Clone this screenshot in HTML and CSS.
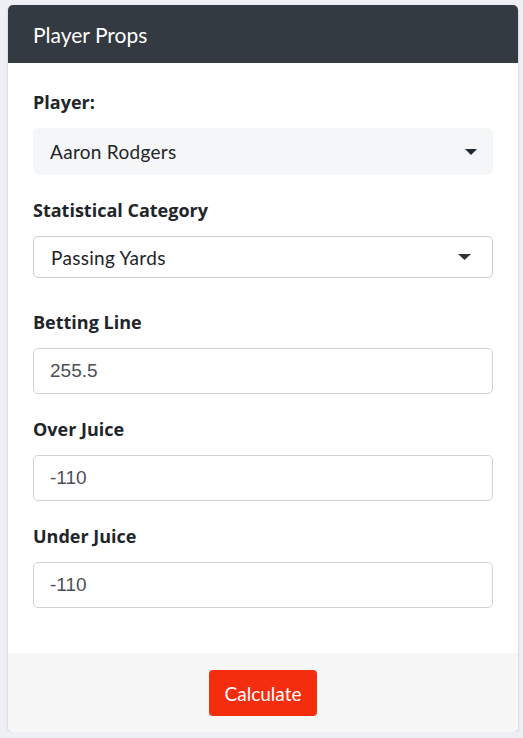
FILE: index.html
```html
<!DOCTYPE html>
<html lang="en">

<head>
    <meta charset="UTF-8">
    <meta name="viewport" content="width=device-width">
    <title>Player Props</title>
    <link rel="stylesheet" href="styles.css">
</head>

<body>
    <div class="card">
        <div class="card-header">Player Props</div>

        <div class="card-body">
            <div class="group">
                <label class="label">Player:</label>
                <div class="select select-filled">
                    <span>Aaron Rodgers</span>
                    <svg class="caret" width="12" height="6" viewBox="0 0 12 6"><path d="M0 0h12L6 6z" fill="#212933"/></svg>
                </div>
            </div>

            <div class="group group-wide">
                <label class="label">Statistical Category</label>
                <div class="select select-bordered">
                    <span>Passing Yards</span>
                    <svg class="caret" width="13" height="6" viewBox="0 0 13 6"><path d="M0 0h13L6.5 6z" fill="#333"/></svg>
                </div>
            </div>

            <div class="group">
                <label class="label">Betting Line</label>
                <input class="input" type="text" value="255.5">
            </div>

            <div class="group">
                <label class="label">Over Juice</label>
                <input class="input" type="text" value="-110">
            </div>

            <div class="group">
                <label class="label">Under Juice</label>
                <input class="input" type="text" value="-110">
            </div>
        </div>

        <div class="card-footer">
            <button class="btn-calc">Calculate</button>
        </div>
    </div>
</body>

</html>
```

FILE: styles.css
```css
* {
    margin: 0;
    padding: 0;
    box-sizing: border-box;
}
body {
    background: #eff0f5;
    padding: 5px 5px 0 8px;
    font-family: Lato, "Noto Sans", sans-serif;
    color: #212529;
}
.card {
    background: #fff;
    border-radius: 5px;
    overflow: hidden;
    box-shadow: 0 1px 3px rgba(0, 0, 0, 0.18);
}
.card-header {
    height: 58px;
    display: flex;
    align-items: center;
    padding: 0 25px;
    background: #343a42;
    color: #fff;
    font-size: 21px;
}
.card-body {
    padding: 27px 25px 22px;
}
.group {
    margin-bottom: 23px;
}
.group-wide {
    margin-bottom: 32px;
}
.label {
    display: block;
    font-family: "Open Sans", Lato, sans-serif;
    font-size: 18px;
    font-weight: 700;
    line-height: 24px;
    margin-bottom: 14px;
}
.select {
    display: flex;
    align-items: center;
    justify-content: space-between;
    font-size: 19px;
    letter-spacing: 0.3px;
    color: #212529;
    padding-left: 17px;
}
.select-filled {
    height: 47px;
    background: #f5f6f8;
    border-radius: 6px;
    padding-right: 16px;
}
.select-bordered {
    height: 42px;
    border: 1px solid #cccccc;
    border-radius: 5px;
    padding-right: 21px;
}
.input {
    display: block;
    width: 100%;
    height: 46px;
    border: 1px solid #d0d3d9;
    border-radius: 5px;
    padding: 0 16px;
    font-family: "Liberation Sans", Arial, sans-serif;
    font-size: 19px;
    color: #495057;
    outline: none;
}
.card-footer {
    background: #f7f7f7;
    padding: 17px 0 16px;
    display: flex;
    justify-content: center;
}
.btn-calc {
    width: 108px;
    height: 46px;
    border: none;
    border-radius: 4px;
    background: #f42d0e;
    color: #fff;
    font-family: Lato, "Noto Sans", sans-serif;
    font-size: 19px;
}
```
